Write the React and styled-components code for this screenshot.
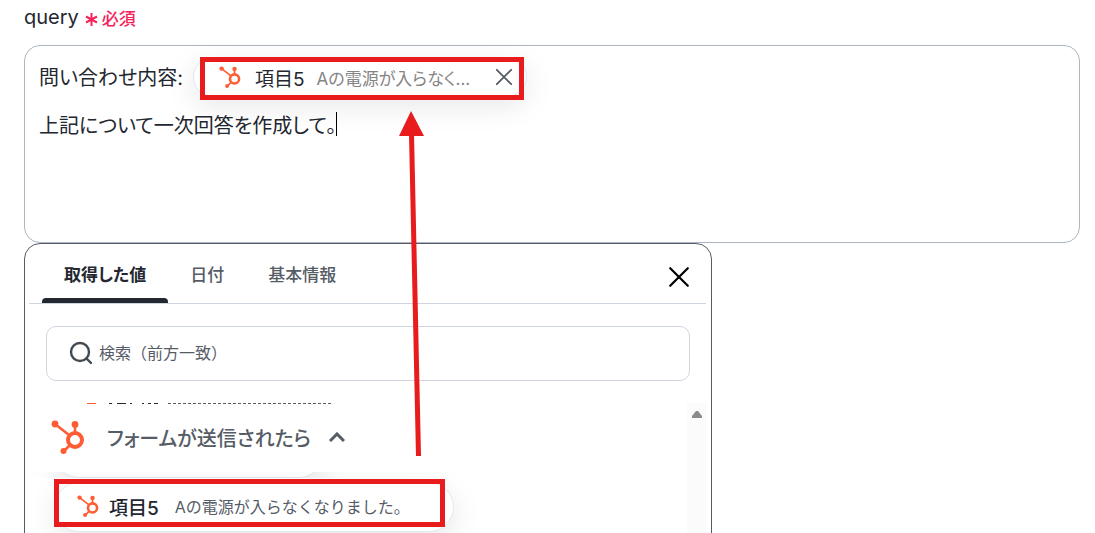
import React from 'react'
import styled, { createGlobalStyle, css } from 'styled-components'

const colors = {
  ink: '#23272f',
  text: '#565c66',
  muted: '#858585',
  outline: '#adb5c2',
  line: '#cfd6df',
  panel: '#555c66',
  brand: '#ff5c35',
  required: '#f5245a',
  mark: '#e81c1c',
}

const GlobalStyle = createGlobalStyle`
  * {
    box-sizing: border-box;
  }
  body {
    margin: 0;
    height: 100vh;
    overflow: hidden;
    background: #ffffff;
    color: ${colors.ink};
    font-family: Inter, 'Noto Sans CJK JP', sans-serif;
    font-feature-settings: 'palt';
  }
  button, input {
    font-family: inherit;
  }
`

const Page = styled.main`
  position: relative;
  height: 100vh;
  overflow: hidden;
  padding: 5px 15px 0 24px;
`

const FieldLabel = styled.div`
  display: flex;
  align-items: center;
  gap: 6px;
  height: 24px;
  margin-bottom: 16px;
  font-size: 20px;
`

const Required = styled.span`
  display: flex;
  align-items: center;
  gap: 4px;
  color: ${colors.required};
  font-size: 17px;
  font-weight: 500;
`

const Editor = styled.div`
  height: 198px;
  padding: 6px 14px;
  border: 1px solid ${colors.outline};
  border-radius: 16px;
  font-size: 20px;
  outline: none;
`

const EditorLine = styled.div`
  display: flex;
  align-items: center;
  height: 48px;
`

const Caret = styled.span`
  width: 1px;
  height: 24px;
  background: #000000;
`

const Framed = styled.span`
  position: relative;
  display: inline-flex;
  &::after {
    content: '';
    position: absolute;
    inset: ${({ $inset }) => $inset};
    border: 5px solid ${colors.mark};
    pointer-events: none;
  }
`

const chip = css`
  display: inline-flex;
  align-items: center;
  border: 1px solid #e3e7ee;
  background: #ffffff;
  box-shadow: 0 8px 30px rgba(0, 0, 0, 0.1);
`

const InlineChip = styled.span`
  ${chip}
  width: 334px;
  height: 40px;
  margin: 2px 0 0 10px;
  padding: 0 13px 0 25px;
  border-radius: 20px;
`

const ChipName = styled.span`
  margin: 0 12px 0 14px;
  font-size: 19px;
`

const ChipValue = styled.span`
  flex: 1;
  color: ${colors.muted};
  font-size: 17px;
  white-space: nowrap;
`

const IconButton = styled.button`
  display: flex;
  padding: 0;
  border: 0;
  background: none;
  color: ${({ $color }) => $color};
  cursor: pointer;
`

const Panel = styled.section`
  max-width: 688px;
  height: 320px;
  padding: 0 5px 0 4px;
  border: 1px solid ${colors.panel};
  border-radius: 16px;
  background: #ffffff;
`

const PanelHeader = styled.header`
  display: flex;
  align-items: center;
  justify-content: space-between;
  height: 60px;
  padding: 6px 16px 0 13px;
  border-bottom: 1px solid ${colors.line};
`

const Tabs = styled.div`
  display: flex;
  align-self: stretch;
`

const Tab = styled.button`
  position: relative;
  padding: 0 22px 6px;
  border: 0;
  background: none;
  color: ${({ $active }) => ($active ? colors.ink : colors.text)};
  font-size: 17px;
  font-feature-settings: 'palt';
  font-weight: ${({ $active }) => ($active ? 700 : 500)};
  cursor: pointer;
  &::after {
    content: '';
    position: absolute;
    inset: auto 0 0;
    height: 5px;
    border-radius: 4px 4px 0 0;
    background: ${({ $active }) => ($active ? colors.ink : 'transparent')};
  }
`

const SearchBox = styled.label`
  display: flex;
  align-items: center;
  gap: 6px;
  height: 55px;
  margin: 22px 16px 22px 17px;
  padding: 0 22px 2px;
  border: 1px solid ${colors.line};
  border-radius: 10px;
  color: #434a54;
`

const SearchInput = styled.input`
  flex: 1;
  padding: 0;
  border: 0;
  outline: none;
  font-size: 16px;
  &::placeholder {
    color: ${colors.text};
    opacity: 1;
  }
`

const ListArea = styled.div`
  display: flex;
  height: 160px;
  overflow: hidden;
`

const List = styled.div`
  flex: 1;
  overflow: hidden;
`

const ScrollTrack = styled.div`
  display: flex;
  justify-content: center;
  width: 19px;
  padding-top: 8px;
  background: #fbfbfb;
`

// Last pixels of a row that has scrolled under the group header
const Strip = styled.div`
  display: flex;
  align-items: flex-end;
  height: 6px;
  padding-left: 25px;
  overflow: hidden;
`

const RowEdge = styled.svg`
  display: block;
`

const GroupHeader = styled.div`
  position: relative;
  z-index: 1;
  display: flex;
  align-items: center;
  height: 68px;
  padding: 0 0 2px 22px;
  background: #ffffff;
`

const GroupTitle = styled.span`
  margin: 0 18px 0 22px;
  color: ${colors.text};
  font-size: 20px;
  font-weight: 500;
`

const ItemChip = styled.button`
  ${chip}
  flex: none;
  width: ${({ $width }) => $width};
  height: 50px;
  padding: 0 22px 2px;
  border-radius: 25px;
  cursor: pointer;
`

const ItemName = styled.span`
  margin: 0 16px 0 10px;
  color: ${colors.ink};
  font-size: 19px;
  font-weight: 500;
`

const ItemValue = styled.span`
  color: ${colors.text};
  font-size: 16px;
  font-feature-settings: normal;
  white-space: nowrap;
`

const ItemRow = styled.div`
  margin-top: 4px;
  padding-left: 25px;
`

const Arrow = styled.svg`
  position: absolute;
  top: 110px;
  left: 398px;
  z-index: 2;
  pointer-events: none;
`

function HubIcon({ size }) {
  return (
    <svg width={size} height={size} viewBox="0 0 34 34" fill="none" stroke={colors.brand}>
      <circle cx="24" cy="20" r="7" strokeWidth="4" />
      <path d="M4 4L18 15M24 5V13M19 25L13 31" strokeWidth="2.6" />
      <circle cx="4" cy="4" r="3.4" fill={colors.brand} stroke="none" />
      <circle cx="24" cy="4.5" r="3.4" fill={colors.brand} stroke="none" />
      <circle cx="12.5" cy="31" r="3" fill={colors.brand} stroke="none" />
    </svg>
  )
}

function CrossIcon({ size, strokeWidth }) {
  return (
    <svg width={size} height={size} viewBox="0 0 20 20" fill="none" stroke="currentColor" strokeWidth={strokeWidth} strokeLinecap="round">
      <path d="M2 2L18 18M18 2L2 18" />
    </svg>
  )
}

const tabs = ['取得した値', '日付', '基本情報']

export default function App() {
  return (
    <Page>
      <GlobalStyle />
      <FieldLabel>
        <span id="query-label">query</span>
        <Required>
          <svg width="13" height="20" viewBox="0 0 13 20" stroke="currentColor" strokeWidth="2">
            <path d="M6.5 6V19M1 9.5L12 15.5M12 9.5L1 15.5" />
          </svg>
          必須
        </Required>
      </FieldLabel>
      <Editor role="textbox" aria-multiline="true" aria-labelledby="query-label" contentEditable suppressContentEditableWarning spellCheck={false}>
        <EditorLine>
          問い合わせ内容:
          <Framed $inset="2px 3px -3px 17px">
            <InlineChip>
              <HubIcon size={22} />
              <ChipName>項目5</ChipName>
              <ChipValue>Aの電源が入らなく...</ChipValue>
              <IconButton type="button" aria-label="削除" $color={colors.text}>
                <CrossIcon size={18} strokeWidth={2} />
              </IconButton>
            </InlineChip>
          </Framed>
        </EditorLine>
        <EditorLine>
          上記について一次回答を作成して。
          <Caret />
        </EditorLine>
      </Editor>

      <Panel>
        <PanelHeader>
          <Tabs role="tablist">
            {tabs.map((tab, index) => (
              <Tab key={tab} type="button" role="tab" aria-selected={index === 0} $active={index === 0}>
                {tab}
              </Tab>
            ))}
          </Tabs>
          <IconButton type="button" aria-label="閉じる" $color="#000000">
            <CrossIcon size={22} strokeWidth={2} />
          </IconButton>
        </PanelHeader>
        <SearchBox>
          <svg width="24" height="24" viewBox="0 0 24 24" fill="none" stroke="currentColor" strokeWidth="2.4" strokeLinecap="round">
            <circle cx="11" cy="11" r="9" />
            <path d="M17.5 17.5L22 22" />
          </svg>
          <SearchInput type="text" aria-label="検索" placeholder="検索（前方一致）" />
        </SearchBox>
        <ListArea>
          <List>
            <RowEdge width="360" height="1" viewBox="0 0 360 1" aria-hidden="true">
              <path d="M58 0.5H67" stroke={colors.brand} />
              <path d="M80 0.5H83M88 0.5H97M101 0.5H103M113 0.5H115M119 0.5H122M125 0.5H129" stroke={colors.ink} />
              <path d="M139 0.5H302" stroke={colors.text} strokeDasharray="3 2" />
            </RowEdge>
            <GroupHeader>
              <HubIcon size={34} />
              <GroupTitle>フォームが送信されたら</GroupTitle>
              <svg width="16" height="10" viewBox="0 0 16 10" fill="none" stroke={colors.text} strokeWidth="3">
                <path d="M1 9L8 2L15 9" />
              </svg>
            </GroupHeader>
            <Strip>
              <ItemChip as="div" $width="270px" />
            </Strip>
            <ItemRow>
              <Framed $inset="-3px 9px 5px 0">
                <ItemChip type="button" $width="400px">
                  <HubIcon size={22} />
                  <ItemName>項目5</ItemName>
                  <ItemValue>Aの電源が入らなくなりました。</ItemValue>
                </ItemChip>
              </Framed>
            </ItemRow>
          </List>
          <ScrollTrack>
            <svg width="10" height="7" viewBox="0 0 10 7" fill="#8b8b8b">
              <path d="M4 0H6L10 5V7H0V5Z" />
            </svg>
          </ScrollTrack>
        </ListArea>
      </Panel>

      <Arrow width="30" height="348" viewBox="0 0 30 348" fill={colors.mark} aria-hidden="true">
        <path d="M13 1L26 26H1Z" />
        <path d="M11 24H16L23 346H18Z" />
      </Arrow>
    </Page>
  )
}
